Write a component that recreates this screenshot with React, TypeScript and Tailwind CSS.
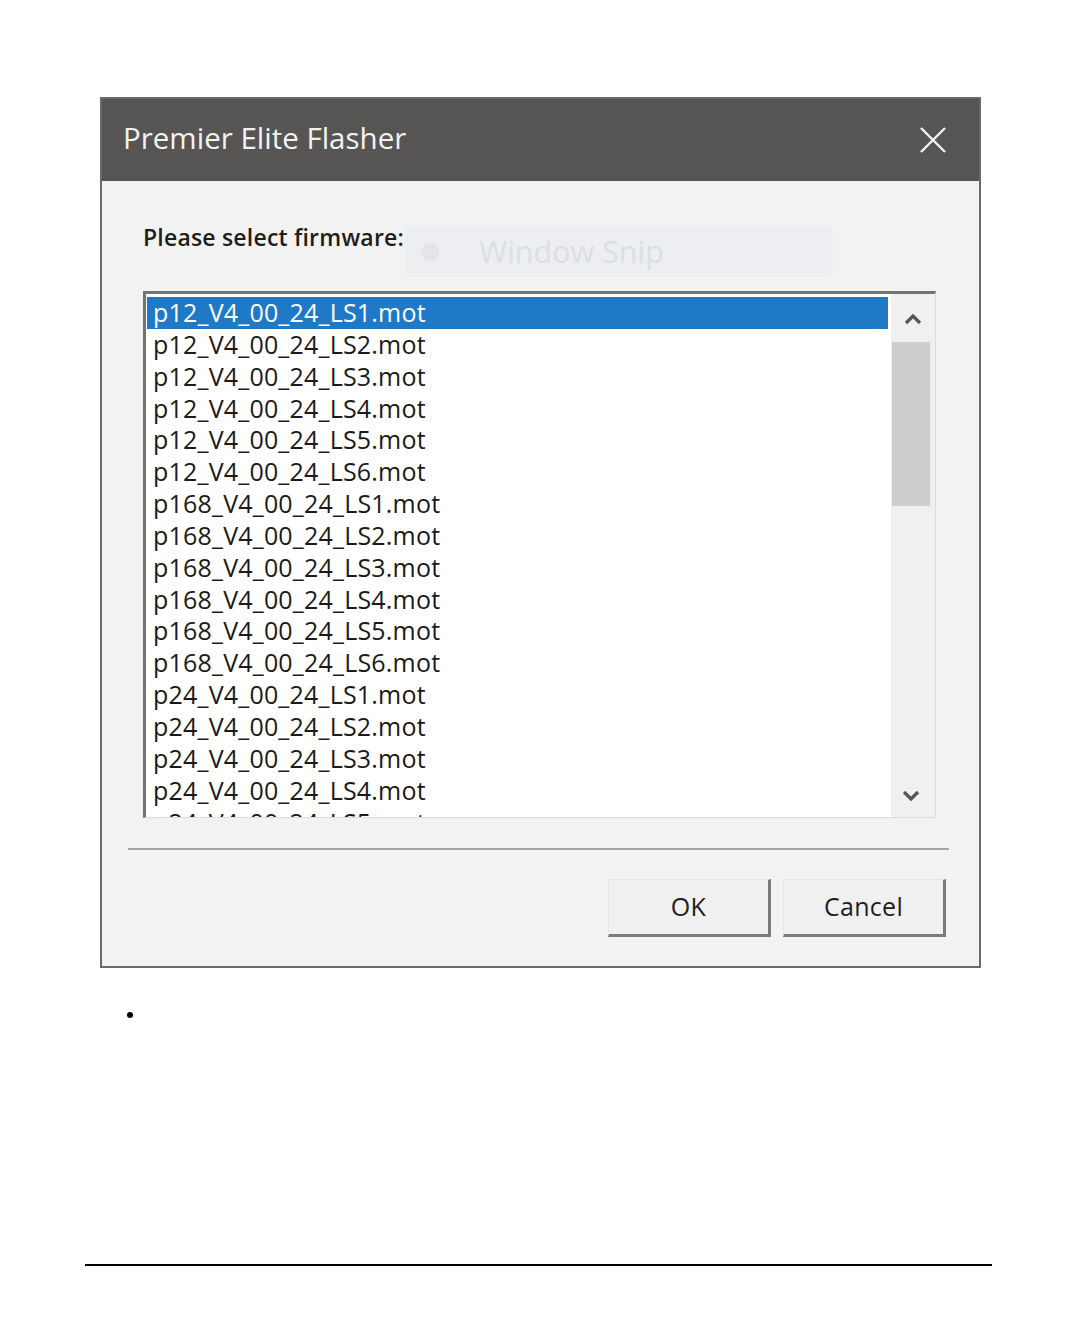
import React from "react";

const files = [
  "p12_V4_00_24_LS1.mot",
  "p12_V4_00_24_LS2.mot",
  "p12_V4_00_24_LS3.mot",
  "p12_V4_00_24_LS4.mot",
  "p12_V4_00_24_LS5.mot",
  "p12_V4_00_24_LS6.mot",
  "p168_V4_00_24_LS1.mot",
  "p168_V4_00_24_LS2.mot",
  "p168_V4_00_24_LS3.mot",
  "p168_V4_00_24_LS4.mot",
  "p168_V4_00_24_LS5.mot",
  "p168_V4_00_24_LS6.mot",
  "p24_V4_00_24_LS1.mot",
  "p24_V4_00_24_LS2.mot",
  "p24_V4_00_24_LS3.mot",
  "p24_V4_00_24_LS4.mot",
  "p24_V4_00_24_LS5.mot",
];

export default function App() {
  return (
    <div className="w-[1077px] h-[1338px] bg-white relative" style={{ fontFamily: '"Open Sans", "Noto Sans", sans-serif' }}>
      <div className="pt-[97px] pl-[100px]">
        <div className="w-[881px] h-[871px] border-2 border-[#6a6a6a] bg-[#f2f2f2] flex flex-col">
          {/* Title bar */}
          <div className="h-[82px] bg-[#575553] flex items-center justify-between pl-[21px] pr-[32px] shrink-0">
            <span className="text-[29.5px] text-[#f2f2f2] mt-[-3px]">Premier Elite Flasher</span>
            <svg width="28" height="28" viewBox="0 0 28 28" className="mt-[0px]">
              <path d="M2 2 L26 26 M26 2 L2 26" stroke="#f2f2f2" strokeWidth="2.4" />
            </svg>
          </div>
          {/* Body */}
          <div className="relative flex-1 flex flex-col">
            <div className="pl-[41px] pt-[39px] h-[110px]">
              <span className="text-[23px] font-semibold text-[#1e1e1e] tracking-[0.2px]">Please select firmware:</span>
            </div>
            {/* Window Snip ghost overlay */}
            <div className="absolute left-[303px] top-[45px] w-[428px] h-[51px] rounded-[6px] bg-[#eceef1] flex items-center">
              <div className="ml-[16px] w-[18px] h-[18px] rounded-full bg-[#e3e5e8]" />
              <span className="ml-[40px] text-[30.5px] text-[#dcdfe3]">Window Snip</span>
            </div>
            {/* Listbox */}
            <div className="ml-[41px] w-[793px] h-[527px] border-t-[3px] border-l-[3px] border-r border-b border-t-[#737373] border-l-[#737373] border-r-[#dcdcdc] border-b-[#dcdcdc] bg-white flex overflow-hidden">
              <div className="flex-1 pt-[3px] pl-[1px] overflow-hidden">
                {files.map((f, i) => (
                  <div
                    key={f}
                    className={
                      i === 0
                        ? "h-[31.85px] mr-[3px] bg-[#1f79c6] text-white text-[25px] font-medium leading-[31.85px] pl-[6px] tracking-[0.2px] whitespace-nowrap"
                        : "h-[31.85px] text-[#1a1a1a] text-[25px] font-medium leading-[31.85px] pl-[6px] tracking-[0.2px] whitespace-nowrap"
                    }
                  >
                    {f}
                  </div>
                ))}
              </div>
              <div className="w-[44px] bg-[#f0f0f0] flex flex-col items-center">
                <svg width="20" height="14" viewBox="0 0 20 14" className="mt-[18px]">
                  <path d="M3 11 L10 4 L17 11" stroke="#555" strokeWidth="3.2" fill="none" />
                </svg>
                <div className="mt-[16px] mr-[4px] w-[38px] h-[164px] bg-[#cdcdcd]" />
                <div className="flex-1" />
                <svg width="20" height="14" viewBox="0 0 20 14" className="mb-[14px] mr-[4px]">
                  <path d="M3 3 L10 10 L17 3" stroke="#555" strokeWidth="3.2" fill="none" />
                </svg>
              </div>
            </div>
            {/* Separator */}
            <div className="ml-[26px] mt-[30px] w-[821px] h-[2px] bg-[#a3a3a3]" />
            {/* Buttons */}
            <div className="flex justify-end gap-[12px] pr-[33px] mt-[29px]">
              <button className="w-[163px] h-[58px] bg-[#f0f0f0] border-t border-l border-t-[#e6e6e6] border-l-[#e6e6e6] border-r-[3px] border-b-[3px] border-r-[#7a7a7a] border-b-[#7a7a7a] text-[25px] font-medium text-[#1e1e1e] tracking-[0.3px]">
                OK
              </button>
              <button className="w-[163px] h-[58px] bg-[#f0f0f0] border-t border-l border-t-[#e6e6e6] border-l-[#e6e6e6] border-r-[3px] border-b-[3px] border-r-[#7a7a7a] border-b-[#7a7a7a] text-[25px] font-medium text-[#1e1e1e] tracking-[0.3px]">
                Cancel
              </button>
            </div>
          </div>
        </div>
      </div>
      <ul className="list-disc ml-[145px] mt-[34px]">
        <li className="h-[24px]"></li>
      </ul>
      <div className="absolute left-[85px] top-[1264px] w-[907px] h-[2px] bg-black" />
    </div>
  );
}
